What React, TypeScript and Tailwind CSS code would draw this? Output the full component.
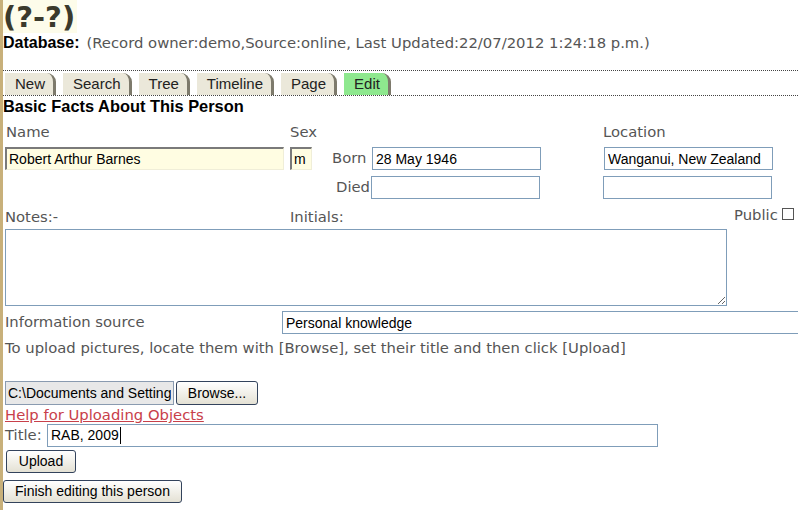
import React from 'react';

const label = "font-['DejaVu_Sans',Verdana,sans-serif] text-[14.8px] text-[#555]";
const field = "h-[23px] border border-[#7f9db9] bg-white px-[3px] font-['Liberation_Sans',Arial,sans-serif] text-[14px] text-black outline-none";
const inset = "h-[23px] border-t-2 border-l-2 border-b border-r border-t-[#7a7a7a] border-l-[#7a7a7a] border-b-[#f0eed8] border-r-[#f0eed8] bg-[#fffde2] px-[2px] font-['Liberation_Sans',Arial,sans-serif] text-[14px] text-black outline-none";
const xpButton = "h-[23px] rounded-[3px] border border-[#33435c] bg-gradient-to-b from-white to-[#e4e1d4] font-['Liberation_Sans',Arial,sans-serif] text-[14px] text-black";

const tabs = ['New', 'Search', 'Tree', 'Timeline', 'Page', 'Edit'];

const App: React.FC = () => {
  return (
    <div className="min-h-[510px] w-[798px] overflow-hidden border-l-[3px] border-[#c8b07a] bg-white">
      {/* header */}
      <div className="inline-block h-[33px] bg-[#fdfcea] pr-[2px] font-['DejaVu_Sans',Verdana,sans-serif] text-[29px] font-bold leading-[34px] text-[#3b3a2c]">
        (?-?)
      </div>
      <div className="flex h-[20px] items-center">
        <span className="font-['Liberation_Sans',Arial,sans-serif] text-[16px] font-bold text-black">Database:</span>
        <span className={`${label} ml-[7px] text-[14.3px] text-[#444]`}>
          (Record owner:demo,Source:online, Last Updated:22/07/2012 1:24:18 p.m.)
        </span>
      </div>

      {/* tabs */}
      <div className="mt-[17px] flex h-[26px] items-end gap-[7px] border-y border-dotted border-[#444] pl-[2px]">
        {tabs.map((t) => (
          <div
            key={t}
            className={`flex h-[22px] items-center rounded-tr-[9px] border-r-[3px] border-[#7d7a6c] pl-[10px] pr-[8px] font-['Liberation_Sans',Arial,sans-serif] text-[15px] text-[#222] ${
              t === 'Edit' ? 'bg-[#8ee88e]' : 'bg-[#ebe8da]'
            }`}
          >
            {t}
          </div>
        ))}
      </div>
      <div className="h-[20px] font-['Liberation_Sans',Arial,sans-serif] text-[16.4px] font-bold leading-[20px] text-black">
        Basic Facts About This Person
      </div>

      {/* basic facts */}
      <div className="mt-[6px] flex h-[20px] items-center">
        <div className={`${label} w-[287px] shrink-0 pl-[3px]`}>Name</div>
        <div className={`${label} w-[313px] shrink-0`}>Sex</div>
        <div className={label}>Location</div>
      </div>
      <div className="mt-[5px] flex items-center">
        <input className={`${inset} ml-[2px] w-[279px] shrink-0`} defaultValue="Robert Arthur Barnes" />
        <input className={`${inset} ml-[6px] w-[22px] shrink-0`} defaultValue="m" />
        <div className={`${label} ml-[20px] w-[40px] shrink-0`}>Born</div>
        <input className={`${field} w-[169px] shrink-0`} defaultValue="28 May 1946" />
        <input className={`${field} ml-[63px] w-[169px] shrink-0`} defaultValue="Wanganui, New Zealand" />
      </div>
      <div className="mt-[6px] flex items-center">
        <div className={`${label} ml-[333px] w-[35px] shrink-0`}>Died</div>
        <input className={`${field} w-[169px] shrink-0`} />
        <input className={`${field} ml-[63px] w-[169px] shrink-0`} />
      </div>
      <div className="mt-[7px] flex h-[22px] items-center">
        <div className={`${label} w-[287px] shrink-0 pl-[2px]`}>Notes:-</div>
        <div className={`${label} w-[442px] shrink-0`}>Initials:</div>
        <div className={`${label} mb-[4px] ml-[2px]`}>Public</div>
        <div className="mb-[7px] ml-[4px] h-[12px] w-[12px] shrink-0 border border-[#555] bg-white" />
      </div>
      <textarea className="ml-[2px] mt-[1px] block h-[77px] w-[722px] resize border border-[#7f9db9] bg-white outline-none" />

      <div className="mt-[5px] flex items-center">
        <div className={`${label} w-[279px] shrink-0 pl-[2px]`}>Information source</div>
        <input className={`${field} w-[540px] shrink-0`} defaultValue="Personal knowledge" />
      </div>
      <div className={`${label} mt-[4px] h-[20px] whitespace-nowrap pl-[2px] leading-[20px]`}>
        To upload pictures, locate them with [Browse], set their title and then click [Upload]
      </div>

      {/* upload */}
      <div className="ml-[2px] mt-[23px] flex items-center">
        <input
          readOnly
          className="h-[24px] w-[169px] border border-[#8a9bb0] bg-[#e8e8e8] px-[2px] font-['Liberation_Sans',Arial,sans-serif] text-[14px] text-black outline-none"
          defaultValue="C:\Documents and Settings\Robert\My Documents\rab2009.jpg"
        />
        <button className={`${xpButton} ml-[2px] h-[24px] w-[82px]`}>Browse...</button>
      </div>
      <a href="#" className={`${label} ml-[2px] block h-[19px] leading-[19px] text-[#c8404a] underline`}>
        Help for Uploading Objects
      </a>
      <div className="flex items-center">
        <div className={`${label} w-[44px] shrink-0 pl-[2px]`}>Title:</div>
        <div className="flex h-[23px] w-[611px] items-center border border-[#7f9db9] bg-white px-[3px] font-['Liberation_Sans',Arial,sans-serif] text-[14px] text-black">
          RAB, 2009<span className="ml-[1px] h-[17px] w-[1px] bg-black" />
        </div>
      </div>
      <button className={`${xpButton} ml-[3px] mt-[3px] block w-[70px]`}>Upload</button>
      <button className={`${xpButton} mt-[7px] block w-[179px]`}>Finish editing this person</button>
    </div>
  );
};

export default App;
